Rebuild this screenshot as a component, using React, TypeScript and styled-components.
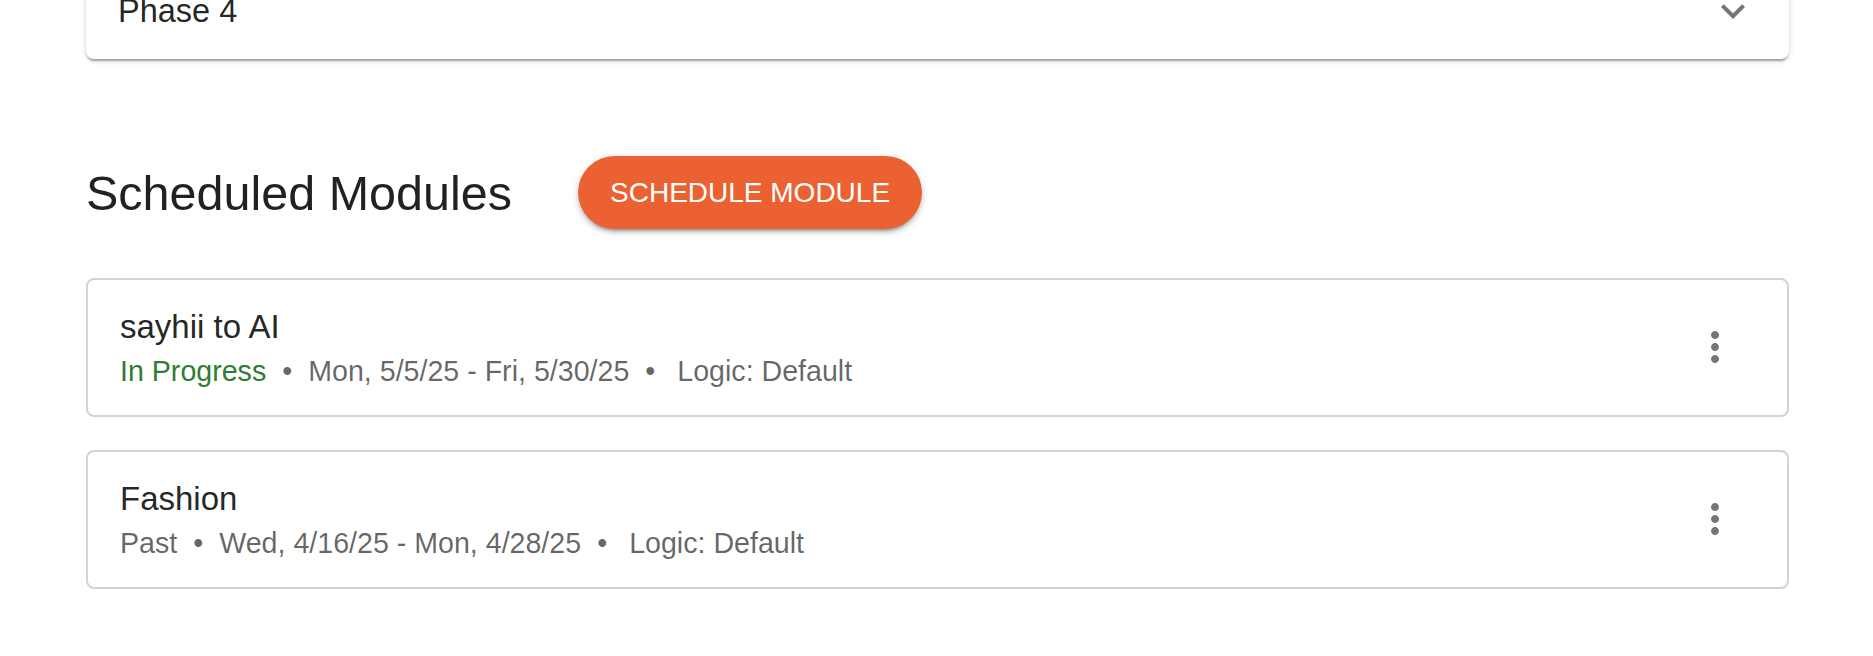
import React from "react";
import styled, { createGlobalStyle } from "styled-components";

const GlobalStyle = createGlobalStyle`
  html, body {
    margin: 0;
    padding: 0;
    background: #ffffff;
    font-family: "Liberation Sans", Arial, sans-serif;
    color: rgba(0, 0, 0, 0.87);
  }
`;

const Page = styled.div`
  display: flex;
  flex-direction: column;
  padding: 0 84px 40px 86px;
  margin-top: -37px;
`;

const PhaseCard = styled.div`
  display: flex;
  align-items: center;
  height: 96px;
  padding: 0 32px;
  box-sizing: border-box;
  background: #fff;
  border-radius: 0 0 8px 8px;
  box-shadow: 0 4px 2px -2px rgba(0, 0, 0, 0.2), 0 2px 2px 0 rgba(0, 0, 0, 0.14),
    0 2px 6px 0 rgba(0, 0, 0, 0.12);
`;

const PhaseTitle = styled.div`
  flex: 1;
  font-size: 32.5px;
  line-height: 48px;
`;

const IconBox = styled.div`
  display: flex;
  align-items: center;
  justify-content: center;
  width: 48px;
  height: 48px;
  color: rgba(0, 0, 0, 0.54);
`;

const SectionHeader = styled.div`
  display: flex;
  align-items: center;
  gap: 66px;
  margin-top: 97px;
  margin-bottom: 49px;
`;

const Heading = styled.h2`
  margin: 0;
  font-size: 48.5px;
  font-weight: 400;
  line-height: 64px;
`;

const PrimaryButton = styled.button`
  height: 73px;
  padding: 0 32px;
  border: none;
  border-radius: 40px;
  background: #eb6132;
  color: #fff;
  font-family: inherit;
  font-size: 28px;
  font-weight: 400;
  letter-spacing: 0;
  text-transform: uppercase;
  box-shadow: 0 6px 2px -4px rgba(0, 0, 0, 0.2), 0 4px 4px 0 rgba(0, 0, 0, 0.14),
    0 2px 10px 0 rgba(0, 0, 0, 0.12);
  cursor: pointer;
`;

const ModuleList = styled.div`
  display: flex;
  flex-direction: column;
  gap: 33px;
`;

const ModuleCard = styled.div`
  display: flex;
  align-items: center;
  padding: 23px 32px 24px;
  border: 2px solid #d3d3d3;
  border-radius: 8px;
  background: #fff;
`;

const ModuleText = styled.div`
  flex: 1;
  display: flex;
  flex-direction: column;
`;

const ModuleTitle = styled.div`
  font-size: 33px;
  line-height: 48px;
`;

const Meta = styled.div`
  display: flex;
  align-items: center;
  font-size: 28.6px;
  line-height: 40px;
  color: rgba(0, 0, 0, 0.6);
  white-space: nowrap;
`;

const Status = styled.span<{ $active?: boolean }>`
  color: ${(p) => (p.$active ? "#2e7d32" : "rgba(0, 0, 0, 0.6)")};
`;

const Dot = styled.span`
  margin: 0 16px;
`;

const Logic = styled.span`
  padding-left: 6px;
`;

const MenuButton = styled.button`
  display: flex;
  align-items: center;
  justify-content: center;
  width: 80px;
  height: 80px;
  padding: 16px;
  border: none;
  border-radius: 50%;
  background: transparent;
  color: rgba(0, 0, 0, 0.54);
  cursor: pointer;
`;

const ExpandMoreIcon = () => (
  <svg width="48" height="48" viewBox="0 0 24 24" fill="currentColor">
    <path d="M16.59 8.59 12 13.17 7.41 8.59 6 10l6 6 6-6z" />
  </svg>
);

const MoreVertIcon = () => (
  <svg width="48" height="48" viewBox="0 0 24 24" fill="currentColor">
    <path d="M12 8c1.1 0 2-.9 2-2s-.9-2-2-2-2 .9-2 2 .9 2 2 2zm0 2c-1.1 0-2 .9-2 2s.9 2 2 2 2-.9 2-2-.9-2-2-2zm0 6c-1.1 0-2 .9-2 2s.9 2 2 2 2-.9 2-2-.9-2-2-2z" />
  </svg>
);

type Module = {
  name: string;
  status: string;
  active: boolean;
  dates: string;
  logic: string;
};

const modules: Module[] = [
  {
    name: "sayhii to AI",
    status: "In Progress",
    active: true,
    dates: "Mon, 5/5/25 - Fri, 5/30/25",
    logic: "Default",
  },
  {
    name: "Fashion",
    status: "Past",
    active: false,
    dates: "Wed, 4/16/25 - Mon, 4/28/25",
    logic: "Default",
  },
];

export default function App() {
  return (
    <>
      <GlobalStyle />
      <Page>
        <PhaseCard>
          <PhaseTitle>Phase 4</PhaseTitle>
          <IconBox>
            <ExpandMoreIcon />
          </IconBox>
        </PhaseCard>

        <SectionHeader>
          <Heading>Scheduled Modules</Heading>
          <PrimaryButton>Schedule Module</PrimaryButton>
        </SectionHeader>

        <ModuleList>
          {modules.map((m) => (
            <ModuleCard key={m.name}>
              <ModuleText>
                <ModuleTitle>{m.name}</ModuleTitle>
                <Meta>
                  <Status $active={m.active}>{m.status}</Status>
                  <Dot>•</Dot>
                  <span>{m.dates}</span>
                  <Dot>•</Dot>
                  <Logic>Logic: {m.logic}</Logic>
                </Meta>
              </ModuleText>
              <MenuButton aria-label="more">
                <MoreVertIcon />
              </MenuButton>
            </ModuleCard>
          ))}
        </ModuleList>
      </Page>
    </>
  );
}
